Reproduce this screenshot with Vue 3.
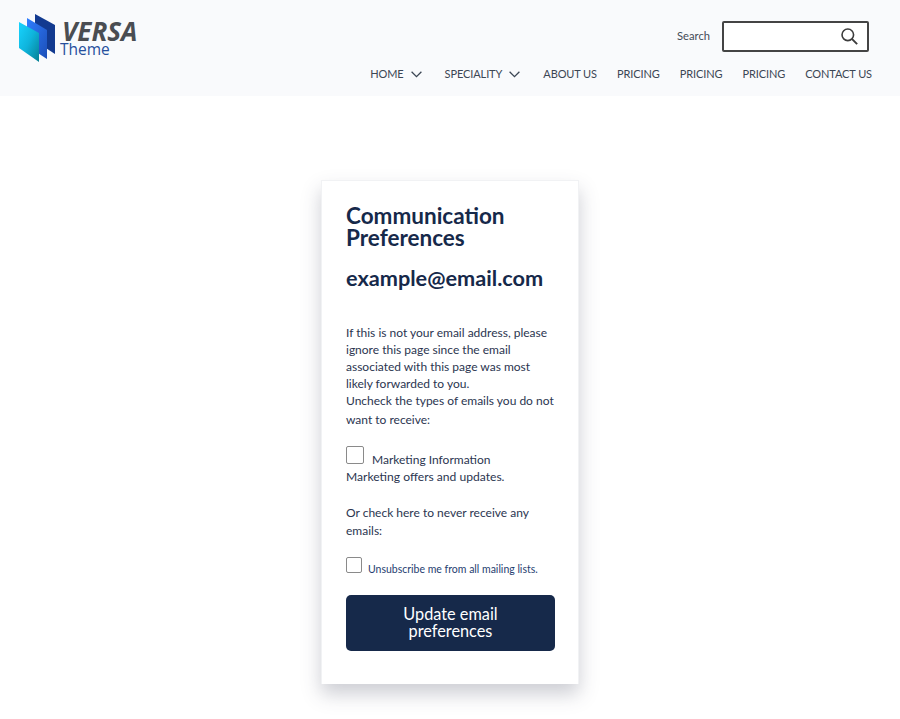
<script setup>
const nav = [
  { label: 'HOME', caret: true },
  { label: 'SPECIALITY', caret: true },
  { label: 'ABOUT US' },
  { label: 'PRICING' },
  { label: 'PRICING' },
  { label: 'PRICING' },
  { label: 'CONTACT US' }
]
</script>

<template>
  <div class="page">
    <header class="header">
      <div class="logo">
        <svg class="mark" width="38" height="50" viewBox="0 0 38 50">
          <defs>
            <linearGradient id="front" x1="0" y1="0" x2="1" y2="1">
              <stop offset="0" stop-color="#17d4ff" />
              <stop offset="0.5" stop-color="#0fb4dc" />
              <stop offset="1" stop-color="#067f92" />
            </linearGradient>
            <linearGradient id="mid" x1="0" y1="0" x2="1" y2="1">
              <stop offset="0" stop-color="#2f7dff" />
              <stop offset="1" stop-color="#1c4fb8" />
            </linearGradient>
          </defs>
          <polygon points="16,0 36,11 36,40 16,27" fill="#123a90" />
          <polygon points="8,4 28,16 28,45 8,32" fill="url(#mid)" />
          <polygon points="0,8 20,19 20,48 0,34" fill="url(#front)" />
        </svg>
        <div class="logo-text">
          <span class="versa">VERSA</span>
          <span class="theme">Theme</span>
        </div>
      </div>
      <div class="right">
        <div class="search">
          <span class="search-label">Search</span>
          <div class="search-box">
            <svg width="17" height="17" viewBox="0 0 20 20" fill="none" stroke="#3c3c3c" stroke-width="1.9">
              <circle cx="8" cy="8" r="6.8" />
              <path d="M12.8 12.8 L19 19" stroke-width="2.3" />
            </svg>
          </div>
        </div>
        <nav class="nav">
          <a v-for="(item, i) in nav" :key="i" class="nav-item">
            {{ item.label }}
            <svg v-if="item.caret" class="caret" width="11" height="7" viewBox="0 0 11 7" fill="none" stroke="#3c4654" stroke-width="1.3">
              <path d="M0.6 0.8 L5.5 5.6 L10.4 0.8" />
            </svg>
          </a>
        </nav>
      </div>
    </header>

    <main class="main">
      <section class="card">
        <h1 class="title">Communication Preferences</h1>
        <h2 class="email">example@email.com</h2>
        <p class="intro">
          If this is not your email address, please ignore this page since the email associated with this page was most likely forwarded to you.<br />
          Uncheck the types of emails you do not<br />
          <span class="last">want to receive:</span>
        </p>
        <div class="option">
          <div class="line"><span class="box big"></span><span class="opt-title">Marketing Information</span></div>
          <div class="opt-desc">Marketing offers and updates.</div>
        </div>
        <p class="never">Or check here to never receive any emails:</p>
        <div class="unsub"><span class="box"></span><span class="unsub-text">Unsubscribe me from all mailing lists.</span></div>
        <button class="btn">Update email preferences</button>
      </section>
    </main>
  </div>
</template>

<style>
html, body { margin: 0; background: #fff; }
</style>

<style scoped>
.page {
  height: 719px;
  overflow: hidden;
  background: #fff;
  font-family: "Lato", "Noto Sans", sans-serif;
  color: #2b3550;
}
.header {
  height: 96px;
  box-sizing: border-box;
  background: #f9fafc;
  display: flex;
  justify-content: space-between;
  padding: 14px 28px 0 19px;
}
.logo { display: flex; align-items: flex-start; gap: 5px; }
.mark { display: block; }
.logo-text { display: flex; flex-direction: column; padding-top: 5px; }
.versa {
  font-family: "Open Sans", sans-serif;
  font-weight: 700;
  font-style: italic;
  font-size: 26px;
  line-height: 24px;
  color: #4a4d52;
}
.theme {
  font-family: "Open Sans", sans-serif;
  font-size: 15.5px;
  line-height: 12px;
  color: #264f9c;
  margin-left: -2px;
}
.right { display: flex; flex-direction: column; align-items: flex-end; }
.search { display: flex; align-items: center; gap: 12px; margin-top: 7px; margin-right: 3px; }
.search-label { font-size: 11.2px; color: #444b58; margin-bottom: 2px; }
.search-box {
  width: 147px;
  height: 31px;
  box-sizing: border-box;
  border: 2px solid #444;
  border-radius: 2px;
  background: #fff;
  display: flex;
  align-items: center;
  justify-content: flex-end;
  padding-right: 9px;
}
.nav { display: flex; gap: 20px; margin-top: 13px; }
.nav-item {
  font-size: 11px;
  letter-spacing: -0.1px;
  line-height: 18px;
  color: #3c4654;
  white-space: nowrap;
  display: flex;
  align-items: center;
}
.caret { margin-left: 7px; margin-right: 3px; }
.main { display: flex; justify-content: center; padding-top: 84px; }
.card {
  width: 258px;
  height: 504px;
  box-sizing: border-box;
  padding: 24px 23px 0 24px;
  background: #fff;
  border: 1px solid #f1f2f4;
  border-bottom: 0;
  box-shadow: 0 10px 18px rgba(60, 66, 90, 0.26);
}
.title {
  margin: 0;
  font-size: 22.5px;
  line-height: 22px;
  font-weight: 700;
  color: #16294a;
}
.email {
  margin: 16px 0 0;
  font-size: 21.7px;
  line-height: 26px;
  font-weight: 700;
  color: #16294a;
}
.intro {
  margin: 33px 0 0;
  font-size: 12px;
  line-height: 17px;
  color: #2b3550;
}
.last { display: inline-block; padding-top: 2px; }
.option { margin-top: 18px; font-size: 12px; line-height: 17px; }
.line { display: flex; align-items: flex-end; }
.box {
  display: block;
  width: 14px;
  height: 14px;
  border: 1px solid #8a8a8a;
  border-radius: 2px;
  flex: none;
}
.box.big { width: 16px; height: 16px; margin-bottom: 4px; }
.opt-title { margin-left: 8px; }
.opt-desc { font-size: 12.1px; }
.never { margin: 19px 0 0; font-size: 12px; line-height: 18px; }
.unsub { display: flex; align-items: flex-end; margin-top: 17px; }
.unsub .box { margin-bottom: 4px; }
.unsub-text { margin-left: 6px; font-size: 10.5px; line-height: 15px; color: #264070; white-space: nowrap; }
.btn {
  display: block;
  width: 209px;
  height: 56px;
  margin-top: 18px;
  border: 0;
  border-radius: 5px;
  background: #16294a;
  color: #fff;
  font-family: inherit;
  font-size: 16.3px;
  font-weight: 400;
  line-height: 17px;
  padding: 0 30px 2px;
  text-align: center;
}
</style>
